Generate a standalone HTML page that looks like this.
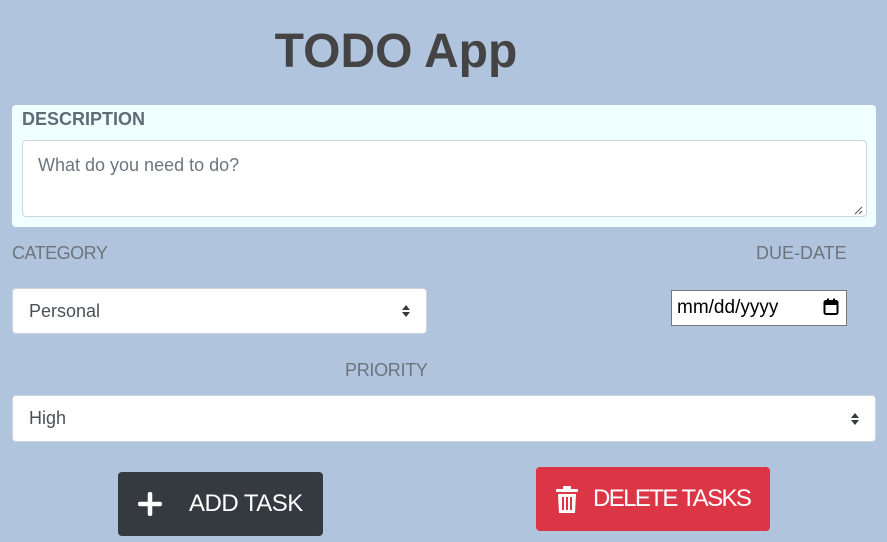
<!DOCTYPE html>
<html><head><style>
*{box-sizing:border-box;margin:0;padding:0}
body{width:887px;height:542px;background:#b0c4de;font-family:"Liberation Sans",sans-serif;position:relative;overflow:hidden}
.a{position:absolute}
.lbl{color:#6c757d;font-size:18px;line-height:20px}
.sel{background:#fff;border:1px solid #ced4da;border-radius:4px;font-size:18px;color:#495057;padding-left:16px;display:flex;align-items:center}
.arr{position:absolute;right:16px;top:50%;margin-top:-7px;width:8px;height:14px}
</style></head><body>
<div class="a" style="left:0;width:792px;top:24px;text-align:center;font-size:48px;font-weight:bold;color:#444;line-height:56px">TODO App</div>
<div class="a" style="left:12px;top:105px;width:864px;height:122px;background:#f0ffff;border-radius:4px"></div>
<div class="a lbl" style="left:22px;top:109px;font-weight:bold;color:#5f6b76">DESCRIPTION</div>
<div class="a" style="left:22px;top:140px;width:845px;height:77px;background:#fff;border:1px solid #ced4da;border-radius:4px"></div>
<div class="a" style="left:38px;top:154px;font-size:18px;color:#6c757d;line-height:22px">What do you need to do?</div>
<svg class="a" style="left:853px;top:205px" width="10" height="10"><path d="M9 2L2 9M9 6L6 9" stroke="#555" stroke-width="1"/></svg>
<div class="a lbl" style="left:12px;top:243px;letter-spacing:-0.5px">CATEGORY</div>
<div class="a lbl" style="left:756px;top:243px">DUE-DATE</div>
<div class="a sel" style="left:12px;top:288px;width:415px;height:46px">Personal<svg class="arr" viewBox="0 0 8 14"><path d="M0 6L4 1L8 6ZM0 8L4 13L8 8Z" fill="#343a40"/></svg></div>
<div class="a" style="left:671px;top:290px;width:176px;height:36px;background:#fff;border:1px solid #767676;font-size:19px;color:#000;padding-left:5px;line-height:34px">mm/dd/yyyy
<svg class="a" style="left:151px;top:7px" width="16" height="18" viewBox="0 0 16 18"><rect x="1.5" y="3" width="13" height="13" rx="1.5" fill="none" stroke="#000" stroke-width="2"/><rect x="1" y="3" width="14" height="4" fill="#000"/><rect x="4" y="0.5" width="2" height="3" fill="#000"/><rect x="10" y="0.5" width="2" height="3" fill="#000"/></svg></div>
<div class="a lbl" style="left:345px;top:360px;letter-spacing:-0.3px">PRIORITY</div>
<div class="a sel" style="left:12px;top:395px;width:864px;height:47px">High<svg class="arr" viewBox="0 0 8 14"><path d="M0 6L4 1L8 6ZM0 8L4 13L8 8Z" fill="#343a40"/></svg></div>
<div class="a" style="left:118px;top:472px;width:205px;height:64px;background:#343a40;border-radius:4px;color:#fff;font-size:24px;display:flex;align-items:center">
<svg style="margin-left:20px" width="24" height="24" viewBox="0 0 24 24"><path d="M12 2V22M2 12H22" stroke="#fff" stroke-width="4.5" stroke-linecap="round"/></svg>
<span style="margin-left:27px;letter-spacing:-0.5px">ADD TASK</span></div>
<div class="a" style="left:536px;top:467px;width:234px;height:64px;background:#dc3545;border-radius:4px;color:#fff;font-size:24px;display:flex;align-items:center">
<svg style="margin-left:20px" width="22" height="27" viewBox="0 0 22 27"><rect x="0" y="3" width="22" height="3" rx="1" fill="#fff"/><rect x="7" y="0" width="8" height="4" rx="1" fill="#fff"/><path d="M2 8H20L19 27H3Z" fill="#fff"/><path d="M7 11V24M11 11V24M15 11V24" stroke="#dc3545" stroke-width="2"/></svg>
<span style="margin-left:15px;letter-spacing:-1.6px">DELETE TASKS</span></div>
</body></html>
